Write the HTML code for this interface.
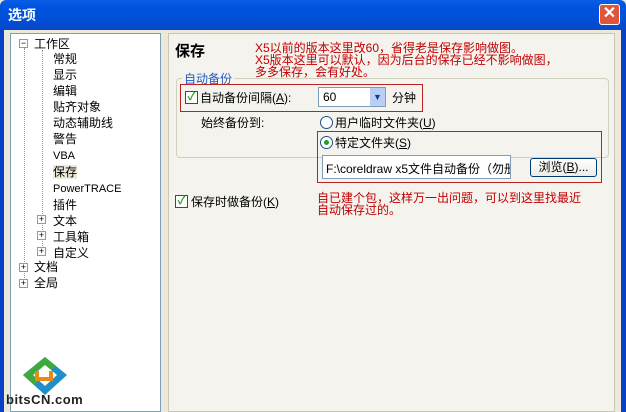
<!DOCTYPE html>
<html><head><meta charset="utf-8"><style>
*{margin:0;padding:0;box-sizing:border-box}
body{width:626px;height:412px;overflow:hidden;background:#ECE9D8;font-family:"Liberation Sans","Noto Sans CJK SC",sans-serif;font-size:12px;color:#000;position:relative}
.a{position:absolute;white-space:nowrap}
.title{left:0;top:0;width:626px;height:30px;background:linear-gradient(#0A5EE6,#0053E0 20%,#0050D8 60%,#0A46C8);border-radius:6px 6px 0 0}
.red{color:#C00000;font-size:12px;line-height:12px}
.cb{width:13px;height:13px;border:1px solid #1C5180;background:#fff;color:#21A121;font-size:11px;line-height:11px;text-align:center;font-weight:bold}
.rd{width:13px;height:13px;border:1px solid #1C5180;border-radius:50%;background:#fff}
.pm{width:9px;height:9px;border:1px solid #919B9C;background:#fff;font-size:9px;line-height:7px;text-align:center;color:#000}
.rbox{border:1px solid #B22;}
</style></head><body>
<div class="a title"></div>
<div class="a" style="left:8px;top:5px;color:#fff;font-weight:bold;font-size:14px">选项</div>
<div class="a" style="left:599px;top:4px;width:21px;height:21px;background:#E0553A;border:1px solid #fff;border-radius:3px;color:#fff;font-size:16px;line-height:18px;text-align:center;font-weight:bold">✕</div>
<div class="a" style="left:0;top:30px;width:4px;height:382px;background:#0840C8"></div>
<div class="a" style="left:621px;top:30px;width:5px;height:382px;background:#0840C8"></div>
<div class="a" style="left:10px;top:33px;width:151px;height:379px;background:#fff;border:1px solid #7F9DB9"></div>
<div class="a" style="left:168px;top:33px;width:447px;height:379px;background:#F4F3EE;border:1px solid #C9C7BA"></div>
<!-- tree lines -->
<div class="a" style="left:24px;top:48px;height:236px;border-left:1px dotted #999"></div>
<div class="a" style="left:42px;top:50px;height:202px;border-left:1px dotted #999"></div>
<div class="a pm" style="left:19px;top:39px">−</div>
<div class="a" style="left:34px;top:35px">工作区</div>
<div class="a" style="left:53px;top:51px;line-height:16px">常规<br>显示<br>编辑<br>贴齐对象<br>动态辅助线<br>警告<br><span style="font-size:11px">VBA</span><br><span style="background:#ECE9D8">保存</span><br><span style="font-size:11px">PowerTRACE</span><br>插件<br>文本<br>工具箱<br>自定义</div>
<div class="a pm" style="left:37px;top:215px">+</div>
<div class="a pm" style="left:37px;top:231px">+</div>
<div class="a pm" style="left:37px;top:247px">+</div>
<div class="a pm" style="left:19px;top:263px">+</div>
<div class="a pm" style="left:19px;top:279px">+</div>
<div class="a" style="left:34px;top:259px;line-height:16px">文档<br>全局</div>
<!-- logo -->
<svg class="a" style="left:20px;top:355px" width="50" height="42" viewBox="0 0 50 42"><polygon points="25,2 47,20 25,40 3,20" fill="#1E8FC8"/><polygon points="25,2 36,11 14,30 3,20" fill="#3DAA3D"/><polygon points="25,10 37,20 25,31 13,20" fill="#fff"/><path d="M17,16 v8 h14 v-8" stroke="#E88A1A" stroke-width="4" fill="none"/></svg>
<div class="a" style="left:6px;top:392px;font-size:13px;font-weight:bold;color:#222;letter-spacing:0.5px">bitsCN.com</div>
<!-- right -->
<div class="a" style="left:175px;top:40px;font-size:15px;font-weight:bold">保存</div>
<div class="a red" style="left:255px;top:42px">X5以前的版本这里改60，省得老是保存影响做图。<br>X5版本这里可以默认，因为后台的保存已经不影响做图，<br>多多保存，会有好处。</div>
<div class="a" style="left:176px;top:78px;width:433px;height:80px;border:1px solid #D0D0BF;border-radius:4px"></div>
<div class="a" style="left:182px;top:70px;color:#1F5BC8;background:#F4F3EE;padding:0 2px">自动备份</div>
<div class="a rbox" style="left:180px;top:84px;width:243px;height:28px"></div>
<div class="a cb" style="left:185px;top:91px">✓</div>
<div class="a" style="left:200px;top:89px">自动备份间隔(<u>A</u>):</div>
<div class="a" style="left:318px;top:87px;width:68px;height:20px;border:1px solid #7F9DB9;background:#fff;padding:2px 4px">60</div>
<div class="a" style="left:370px;top:88px;width:15px;height:18px;background:#B9CFF5;color:#1D3E87;font-size:9px;text-align:center;line-height:18px">▼</div>
<div class="a" style="left:392px;top:89px">分钟</div>
<div class="a" style="left:201px;top:114px">始终备份到:</div>
<div class="a rd" style="left:320px;top:116px"></div>
<div class="a" style="left:335px;top:114px">用户临时文件夹(<u>U</u>)</div>
<div class="a rbox" style="left:317px;top:131px;width:285px;height:52px"></div>
<div class="a rd" style="left:320px;top:136px"><div style="margin:3px;width:5px;height:5px;border-radius:50%;background:#21A121"></div></div>
<div class="a" style="left:335px;top:134px">特定文件夹(<u>S</u>)</div>
<div class="a" style="left:322px;top:155px;width:189px;height:24px;border:1px solid #7F9DB9;background:#fff;padding:4px 3px;overflow:hidden">F:\coreldraw x5文件自动备份（勿册</div>
<div class="a" style="left:530px;top:158px;width:67px;height:19px;border:1px solid #003C74;border-radius:3px;background:linear-gradient(#fff,#ECEBE6);text-align:center;line-height:17px">浏览(<u>B</u>)...</div>
<div class="a cb" style="left:175px;top:195px">✓</div>
<div class="a" style="left:191px;top:193px">保存时做备份(<u>K</u>)</div>
<div class="a red" style="left:317px;top:192px">自已建个包，这样万一出问题，可以到这里找最近<br>自动保存过的。</div>
</body></html>
